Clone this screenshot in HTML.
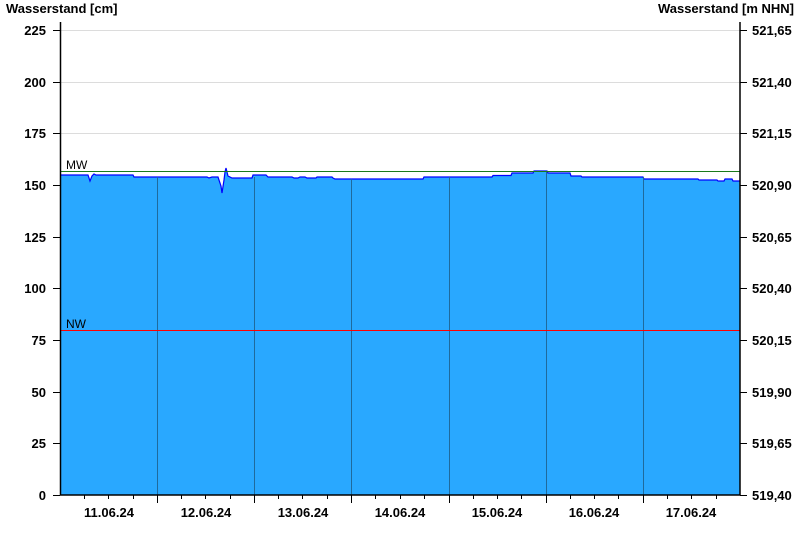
<!DOCTYPE html>
<html><head><meta charset="utf-8"><style>
html,body{margin:0;padding:0;background:#fff;width:800px;height:550px;overflow:hidden}
svg text{font-family:"Liberation Sans",Arial,sans-serif;font-weight:bold;font-size:13px;fill:#000}
</style></head><body>
<svg width="800" height="550" viewBox="0 0 800 550" xmlns="http://www.w3.org/2000/svg">
<text x="6" y="13">Wasserstand [cm]</text>
<text x="794" y="13" text-anchor="end">Wasserstand [m NHN]</text>
<g stroke="#dcdcdc" stroke-width="1">
<line x1="60" x2="740" y1="30.5" y2="30.5"/>
<line x1="60" x2="740" y1="82.5" y2="82.5"/>
<line x1="60" x2="740" y1="133.5" y2="133.5"/>
</g>
<polygon fill="#29a8ff" points="60,175 88,175 90,181 92,176 94,174 96,175 133,175 134,177 207,177 209,178 212,177 218,177 221,186 222,193 224,180 225,172 226,168 228,176 232,178 252,178 253,175 266,175 268,177 292,177 294,178 298,178 300,177 305,177 307,178 316,178 317,177 332,177 333,178 335,179 423,179 424,177 492,177 493,175.5 511,175.5 512,173 533,173 534,171 547,171 548,173 570,173 571,176 581,176 582,177 643,177 644,179 698,179 699,180 717,180 718,181 724,181 725,179 732,179 733,181 740,181 740,495 60,495"/>
<polyline fill="none" stroke="#0000ff" stroke-width="1.2" points="60,175 88,175 90,181 92,176 94,174 96,175 133,175 134,177 207,177 209,178 212,177 218,177 221,186 222,193 224,180 225,172 226,168 228,176 232,178 252,178 253,175 266,175 268,177 292,177 294,178 298,178 300,177 305,177 307,178 316,178 317,177 332,177 333,178 335,179 423,179 424,177 492,177 493,175.5 511,175.5 512,173 533,173 534,171 547,171 548,173 570,173 571,176 581,176 582,177 643,177 644,179 698,179 699,180 717,180 718,181 724,181 725,179 732,179 733,181 740,181"/>
<g stroke="#1f6a9c" stroke-width="1">
<line x1="157.5" x2="157.5" y1="177" y2="495"/>
<line x1="254.5" x2="254.5" y1="177" y2="495"/>
<line x1="351.5" x2="351.5" y1="179" y2="495"/>
<line x1="449.5" x2="449.5" y1="177" y2="495"/>
<line x1="546.5" x2="546.5" y1="171" y2="495"/>
<line x1="643.5" x2="643.5" y1="177" y2="495"/>
</g>
<line x1="60" x2="740" y1="171.5" y2="171.5" stroke="#1a7a1a" stroke-width="1"/>
<line x1="60" x2="740" y1="330.5" y2="330.5" stroke="#ff0000" stroke-width="1"/>
<text x="66" y="169" style="font-weight:normal;font-size:12px">MW</text>
<text x="66" y="328" style="font-weight:normal;font-size:12px">NW</text>
<g stroke="#000" stroke-width="1.5">
<line x1="60.5" x2="60.5" y1="22" y2="495"/>
<line x1="740" x2="740" y1="22" y2="495"/>
<line x1="60" x2="740" y1="495" y2="495"/>
</g>
<path stroke="#000" stroke-width="1" fill="none" d="
M53 30.5h7M53 82.5h7M53 133.5h7M53 185.5h7M53 237.5h7M53 288.5h7M53 340.5h7M53 392.5h7M53 443.5h7M53 495.5h7
M740 30.5h7M740 82.5h7M740 133.5h7M740 185.5h7M740 237.5h7M740 288.5h7M740 340.5h7M740 392.5h7M740 443.5h7M740 495.5h7"/>
<g text-anchor="end">
<text x="46" y="35">225</text><text x="46" y="87">200</text><text x="46" y="138">175</text>
<text x="46" y="190">150</text><text x="46" y="242">125</text><text x="46" y="293">100</text>
<text x="46" y="345">75</text><text x="46" y="397">50</text><text x="46" y="448">25</text><text x="46" y="500">0</text>
</g>
<g>
<text x="752" y="35">521,65</text><text x="752" y="87">521,40</text><text x="752" y="138">521,15</text>
<text x="752" y="190">520,90</text><text x="752" y="242">520,65</text><text x="752" y="293">520,40</text>
<text x="752" y="345">520,15</text><text x="752" y="397">519,90</text><text x="752" y="448">519,65</text><text x="752" y="500">519,40</text>
</g>
<g text-anchor="middle">
<text x="109" y="517">11.06.24</text><text x="206" y="517">12.06.24</text><text x="303" y="517">13.06.24</text>
<text x="400" y="517">14.06.24</text><text x="497" y="517">15.06.24</text><text x="594" y="517">16.06.24</text>
<text x="691" y="517">17.06.24</text>
</g>
<path stroke="#000" stroke-width="1" fill="none" d="
M84.5 495v4M108.5 495v4M133.5 495v4M157.5 495v8
M181.5 495v4M205.5 495v4M230.5 495v4M254.5 495v8
M278.5 495v4M302.5 495v4M327.5 495v4M351.5 495v8
M375.5 495v4M400.5 495v4M424.5 495v4M449.5 495v8
M473.5 495v4M497.5 495v4M521.5 495v4M546.5 495v8
M570.5 495v4M594.5 495v4M618.5 495v4M643.5 495v8
M667.5 495v4M691.5 495v4M716.5 495v4"/>
</svg>
</body></html>
